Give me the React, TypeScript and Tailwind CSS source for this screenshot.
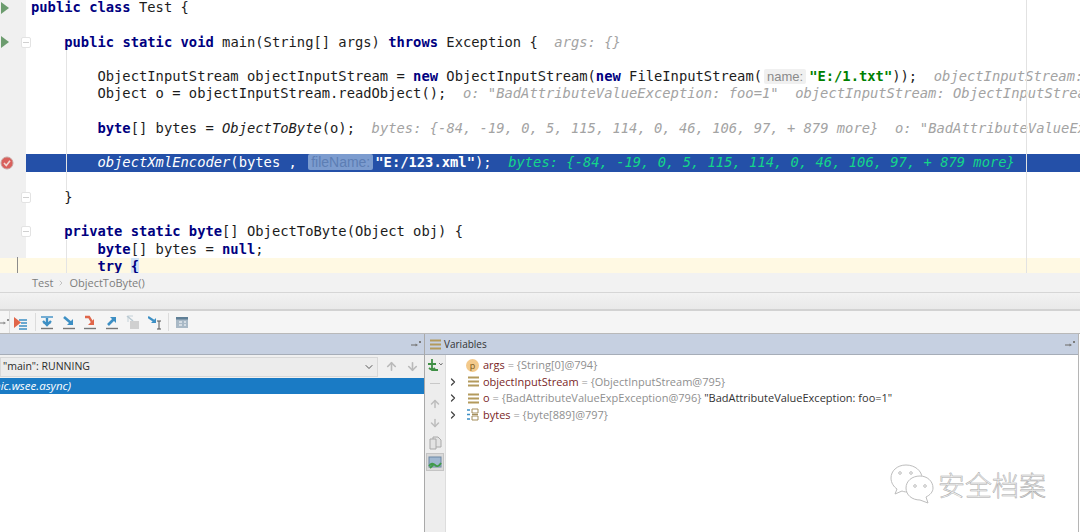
import type { ReactNode } from "react";
import { ArrowDown, ArrowUp, ChevronDown, ChevronRight } from "lucide-react";

const K = ({ children }: { children: ReactNode }) => (
  <span className="font-bold text-[#000080]">{children}</span>
);
const S = ({ children }: { children: ReactNode }) => (
  <span className="font-bold text-[#008000]">{children}</span>
);
const H = ({ children }: { children: ReactNode }) => (
  <span className="italic text-[#a3a3a3]">{children}</span>
);
const I = ({ children }: { children: ReactNode }) => <span className="italic">{children}</span>;

const Fold = () => (
  <span className="absolute right-[-5px] top-[3px] h-[11px] w-[10px] rounded-[2px] border border-[#e3e3e3] bg-white">
    <span className="mx-auto mt-[4px] block h-px w-[6px] bg-[#d0d0d0]" />
  </span>
);

const RunMark = () => (
  <svg width="8" height="12" viewBox="0 0 8 12" className="ml-[1px]">
    <path d="M0 0 L8 6 L0 12 Z" fill="#6c9c6e" />
  </svg>
);

const Breakpoint = () => (
  <svg width="14" height="14" viewBox="0 0 14 14" className="ml-[0px]">
    <circle cx="7" cy="7" r="6" fill="#d9605c" stroke="#c9a3a0" />
    <path d="M4 7 L6.3 9.5 L10 4.8" fill="none" stroke="#f3d9d4" strokeWidth="1.6" />
  </svg>
);

function Line({
  children,
  gutter,
  fold,
  selected,
  current,
  first,
}: {
  children?: ReactNode;
  gutter?: ReactNode;
  fold?: boolean;
  selected?: boolean;
  current?: boolean;
  first?: boolean;
}) {
  return (
    <div className={`flex ${first ? "h-[16.25px]" : "h-[17.25px]"} ${current ? "bg-[#fff9e3]" : ""}`}>
      <div
        className={`relative flex w-[26px] shrink-0 items-center ${current ? "" : "bg-[#f0f0f0]"}`}
      >
        {gutter}
        {fold && <Fold />}
      </div>
      <pre
        className={`flex-1 overflow-hidden whitespace-pre pl-[5px] font-['DejaVu_Sans_Mono',monospace] text-[13.8px] ${
          first ? "leading-[15.25px]" : "leading-[17.25px]"
        } ${selected ? "bg-[#2450a8] text-white" : "text-[#1c1c1c]"}`}
      >
        {children}
      </pre>
    </div>
  );
}

function Editor() {
  return (
    <div className="relative h-[273px] shrink-0 overflow-hidden bg-white">
      <div>
        <Line first gutter={<RunMark />}>
          <K>public class</K> Test {"{"}
        </Line>
        <Line />
        <Line gutter={<RunMark />} fold>
          {"    "}
          <K>public static void</K> main(String[] args) <K>throws</K> Exception {"{  "}
          <H>args: {"{}"}</H>
        </Line>
        <Line />
        <Line>
          {"        ObjectInputStream objectInputStream = "}
          <K>new</K> ObjectInputStream(<K>new</K> FileInputStream(
          <span className="ml-[2px] mr-[3px] rounded-[2px] bg-[#f0f0f0] px-[3px] font-['Liberation_Sans',sans-serif] text-[13px] text-[#8a8a8a]">
            name:
          </span>
          <S>"E:/1.txt"</S>
          {"));  "}
          <H>objectInputStream: ObjectInputStream@795</H>
        </Line>
        <Line>
          {"        Object o = objectInputStream.readObject();  "}
          <H>o: "BadAttributeValueException: foo=1"  objectInputStream: ObjectInputStream@795</H>
        </Line>
        <Line />
        <Line>
          {"        "}
          <K>byte</K>[] bytes = <I>ObjectToByte</I>(o);{"  "}
          <H>
            bytes: {"{-84, -19, 0, 5, 115, 114, 0, 46, 106, 97, + 879 more}"}
            {'  o: "BadAttributeValueException: foo=1"'}
          </H>
        </Line>
        <Line />
        <Line gutter={<Breakpoint />} selected>
          {"        "}
          <I>objectXmlEncoder</I>(bytes ,{" "}
          <span className="ml-[3px] mr-[2px] rounded-[2px] bg-[#7c9ccf] px-[3px] font-['Liberation_Sans',sans-serif] text-[14px] text-[#5d7eb4]">
            fileName:
          </span>
          <span className="font-bold">"E:/123.xml"</span>
          {");  "}
          <span className="italic text-[#14d68a]">
            bytes: {"{-84, -19, 0, 5, 115, 114, 0, 46, 106, 97, + 879 more}"}
          </span>
        </Line>
        <Line />
        <Line fold>{"    }"}</Line>
        <Line />
        <Line fold>
          {"    "}
          <K>private static byte</K>[] ObjectToByte(Object obj) {"{"}
        </Line>
        <Line>
          {"        "}
          <K>byte</K>[] bytes = <K>null</K>;
        </Line>
        <Line current>
          {"        "}
          <K>try</K> <span className="bg-[#cfe3f7] font-bold text-[#000080]">{"{"}</span>
        </Line>
      </div>
      {/* indent guides + right margin + caret mark, painted over the lines */}
      <div className="absolute left-[66px] top-[50px] h-[140px] w-px bg-[#e4e4e4]" />
      <div className="absolute left-[66px] top-[240px] h-[33px] w-px bg-[#e4e4e4]" />
      <div className="absolute left-[1026px] top-0 h-[273px] w-px bg-[#e2e2e2]" />
      <div className="absolute left-[17px] top-[257px] h-[16px] w-px bg-[#8c8c8c]" />
    </div>
  );
}

const Pin = ({ className = "" }: { className?: string }) => (
  <svg width="10" height="8" viewBox="0 0 10 8" className={className}>
    <path d="M0 5 H6" stroke="#7b7b7b" strokeWidth="1.2" />
    <path d="M4.5 3.5 L7 5 L4.5 6.5 Z" fill="#7b7b7b" />
    <rect x="8" y="1" width="2" height="2" fill="#7b7b7b" />
  </svg>
);

const StepIcon = ({ children, w = 14 }: { children: ReactNode; w?: number }) => (
  <svg width={w} height="15" viewBox={`0 0 ${w} 15`} className="shrink-0">
    {children}
  </svg>
);

function Toolbar() {
  const blue = "#3d8fc4";
  const red = "#e0664a";
  return (
    <div className="flex h-[22px] shrink-0 items-center bg-[#f5f5f5]">
      <Pin className="ml-[-1px] opacity-80" />
      <div className="ml-[0px] h-[22px] w-px bg-[#dcdcdc]" />
      <div className="ml-[4px]">
        <StepIcon>
          <path d="M0 2 L7 7.5 L0 13 Z" fill={red} />
          <path d="M5 5 H13 M7 8 H13 M5 11 H13 M5 14 H13" stroke={blue} strokeWidth="1.4" />
        </StepIcon>
      </div>
      <div className="ml-[7px] h-[18px] w-px bg-[#dcdcdc]" />
      <div className="ml-[4px] flex items-center gap-[7.6px]">
        <StepIcon>
          <path d="M1 2 H13" stroke={blue} strokeWidth="1.4" />
          <path d="M7 3 V9 M3 6 L7 10 L11 6" stroke={blue} strokeWidth="2.4" fill="none" />
          <path d="M3 8 H11" stroke={blue} strokeWidth="0.8" />
          <path d="M1 13.5 H13" stroke="#777" strokeWidth="1.4" />
        </StepIcon>
        <StepIcon>
          <path d="M2 2 L9 8" stroke={blue} strokeWidth="2.6" />
          <path d="M5 10 H11 V4 Z" fill={blue} />
          <path d="M1 13.5 H13" stroke="#777" strokeWidth="1.4" />
        </StepIcon>
        <StepIcon>
          <path d="M2 2 H6 L9 7" stroke={red} strokeWidth="2.4" fill="none" />
          <path d="M5 10 H11 V4 Z" fill={red} />
          <path d="M1 13.5 H13" stroke="#777" strokeWidth="1.4" />
        </StepIcon>
        <StepIcon>
          <path d="M3 10 L9 4" stroke={blue} strokeWidth="2.6" />
          <path d="M5 2 H11 V8 Z" fill={blue} />
          <path d="M1 13.5 H13" stroke="#777" strokeWidth="1.4" />
        </StepIcon>
        <StepIcon>
          <path d="M1 1 L7 6" stroke="#b9c9d2" strokeWidth="1.6" />
          <path d="M2 7 V1 M2 1 H7" stroke="#b9c9d2" strokeWidth="0.8" />
          <rect x="4" y="6" width="9" height="8" fill="#d0d0d0" />
        </StepIcon>
        <StepIcon>
          <path d="M0 2 L6 6" stroke={blue} strokeWidth="2.2" />
          <path d="M3 8 H8 V3 Z" fill={blue} />
          <path d="M9 6 H13 M11 6 V14 M9 14 H13" stroke="#555" strokeWidth="1" />
        </StepIcon>
      </div>
      <div className="ml-[6px] h-[18px] w-px bg-[#dcdcdc]" />
      <div className="ml-[6px]">
        <StepIcon>
          <rect x="1" y="2" width="12" height="11" fill="#a9b9c6" />
          <rect x="1" y="2" width="12" height="2.5" fill="#5f7f96" />
          <path d="M4 7 H7 M4 10 H7 M9 7 H11 M9 10 H11" stroke="#fff" strokeWidth="1.2" />
        </StepIcon>
      </div>
    </div>
  );
}

function FramesPanel() {
  return (
    <div className="flex w-[425px] shrink-0 flex-col border-r border-[#a9a9a9] bg-white">
      <div className="flex h-[21px] shrink-0 items-center justify-end border-b border-[#a6adb8] bg-[#c6d0e1] pr-[3px]">
        <Pin />
      </div>
      <div className="flex h-[23px] shrink-0 items-center bg-[#f0f0f0]">
        <div className="flex h-[20px] w-[378px] items-center justify-between border border-[#d8d8d8] bg-[#ececec] pr-[2px] pl-[2px] font-['Open_Sans',sans-serif] text-[10.5px] text-[#2b2b2b]">
          <span>"main": RUNNING</span>
          <ChevronDown size={12} strokeWidth={2} className="text-[#555]" />
        </div>
        <div className="ml-[7px] flex items-center gap-[8px] text-[#b9b9b9]">
          <ArrowUp size={13} strokeWidth={3} />
          <ArrowDown size={13} strokeWidth={3} />
        </div>
      </div>
      <div className="h-[16px] shrink-0 overflow-hidden whitespace-nowrap bg-[#1a7bc5] font-['Open_Sans',sans-serif] text-[11.5px] italic leading-[16px] text-white">
        <span className="ml-[-6px]">nic.wsee.async)</span>
      </div>
    </div>
  );
}

const StackIcon = () => (
  <svg width="11" height="11" viewBox="0 0 11 11" className="shrink-0">
    <path d="M0 1.5 H11 M0 5.5 H11 M0 9.5 H11" stroke="#b39a5c" strokeWidth="2.2" />
  </svg>
);

function VarRow({
  chevron = true,
  icon,
  children,
}: {
  chevron?: boolean;
  icon: ReactNode;
  children: ReactNode;
}) {
  return (
    <div className="flex h-[16.5px] items-center whitespace-nowrap">
      <div className="flex w-[13px] shrink-0 justify-center">
        {chevron && <ChevronRight size={12} strokeWidth={2.5} className="text-[#444]" />}
      </div>
      <div className="flex w-[24px] shrink-0 justify-end pr-[4px]">{icon}</div>
      <div className="font-['Open_Sans',sans-serif] text-[11px] text-[#8f8f8f]">{children}</div>
    </div>
  );
}

const N = ({ children }: { children: ReactNode }) => (
  <span className="text-[#7a1f1f]">{children}</span>
);

function VariablesPanel() {
  return (
    <div className="flex min-w-0 flex-1 flex-col">
      <div className="flex h-[21px] shrink-0 items-center border-b border-[#a6adb8] bg-[#c6d0e1] pl-[5px] pr-[3px]">
        <StackIcon />
        <span className="ml-[3px] flex-1 font-['Open_Sans',sans-serif] text-[10px] text-[#333]">
          Variables
        </span>
        <Pin />
      </div>
      <div className="flex flex-1">
        <div className="flex w-[21px] shrink-0 flex-col items-center border-r border-[#dddddd] bg-[#ededed] pt-[3px]">
          <svg width="16" height="15" viewBox="0 0 16 15">
            <path
              d="M5 1 V12 H11 M1 6 H9 M2 10 Q5 13 8 10"
              stroke="#3f8f45"
              strokeWidth="1.8"
              fill="none"
            />
            <path d="M12 5 L14 7 L15.5 5" stroke="#777" fill="none" />
          </svg>
          <div className="mt-[10px] h-px w-[10px] bg-[#c8c8c8]" />
          <ArrowUp size={12} strokeWidth={3} className="mt-[14px] text-[#bdbdbd]" />
          <ArrowDown size={12} strokeWidth={3} className="mt-[7px] text-[#bdbdbd]" />
          <svg width="13" height="14" viewBox="0 0 13 14" className="mt-[7px]">
            <path d="M1 3 H7 V13 H1 Z M4 3 V1 H9 L12 4 V11 H7" fill="#e3e3e3" stroke="#a9a9a9" />
          </svg>
          <div className="mt-[3px] flex h-[18px] w-[18px] items-center justify-center border border-[#c4c4c4] bg-[#d9d9d9]">
            <svg width="14" height="13" viewBox="0 0 14 13">
              <rect x="1" y="1" width="12" height="10" fill="#9fb7d0" stroke="#6c87a3" />
              <path d="M1 10 Q4 6 7 9 T13 7 M2 12 L6 8" stroke="#3f9a4a" strokeWidth="1.8" fill="none" />
            </svg>
          </div>
        </div>
        <div className="flex-1 bg-white pt-[2px]">
          <VarRow
            chevron={false}
            icon={
              <span className="flex h-[13px] w-[13px] items-center justify-center rounded-full bg-[#f3c98b] font-['Open_Sans',sans-serif] text-[9px] leading-none text-[#7a5a20]">
                p
              </span>
            }
          >
            <N>args</N> = {"{String[0]@794}"}
          </VarRow>
          <VarRow icon={<StackIcon />}>
            <N>objectInputStream</N> = {"{ObjectInputStream@795}"}
          </VarRow>
          <VarRow icon={<StackIcon />}>
            <N>o</N> = {"{BadAttributeValueExpException@796} "}
            <span className="text-[#333]">"BadAttributeValueException: foo=1"</span>
          </VarRow>
          <VarRow
            icon={
              <svg width="12" height="13" viewBox="0 0 12 13">
                <path d="M0 2 H3 M0 6.5 H3 M0 11 H3" stroke="#3d8fc4" strokeWidth="1.4" />
                <path d="M5 1 H11 V5 H5 Z M5 8 H11 V12 H5 Z M5 6.5 H11" stroke="#a48d5a" fill="none" />
              </svg>
            }
          >
            <N>bytes</N> = {"{byte[889]@797}"}
          </VarRow>
        </div>
      </div>
    </div>
  );
}

function Watermark() {
  return (
    <div className="absolute left-[889px] top-[463px] flex items-center">
      <svg width="48" height="42" viewBox="0 0 48 42" fill="#fff" stroke="#bdbdbd" strokeWidth="1">
        <path d="M17 2 C8 2 2 8 2 15 C2 20 5 24 8 26 L6 31 L13 28 C15 29 18 29 20 29 C28 29 33 22 33 15 C33 8 26 2 17 2 Z" />
        <path d="M31 13 C23 13 17 18 17 25 C17 32 23 37 31 37 L39 40 L37 34 C41 32 44 29 44 25 C44 18 38 13 31 13 Z" />
        <circle cx="11" cy="10" r="1.3" />
        <circle cx="22" cy="10" r="1.3" />
        <circle cx="26" cy="23" r="1.3" />
        <circle cx="36" cy="23" r="1.3" />
      </svg>
      <span className="ml-[1px] font-['Noto_Sans_CJK_SC',sans-serif] text-[27px] font-light leading-none tracking-[0px] text-[#f4f4f4] [-webkit-text-stroke:0.5px_#a8a8a8]">
        安全档案
      </span>
    </div>
  );
}

export default function App() {
  return (
    <div className="relative flex h-[532px] w-[1080px] flex-col overflow-hidden bg-white">
      <Editor />
      <div className="flex h-[20px] shrink-0 items-center gap-[4px] border-b border-[#d6d6d6] bg-[#f2f2f2] pl-[32px] pt-[1px] font-['Open_Sans',sans-serif] text-[11px] text-[#7d7d7d]">
        <span>Test</span>
        <ChevronRight size={8} className="text-[#aaa]" />
        <span>ObjectToByte()</span>
      </div>
      <div className="h-[18px] shrink-0 border-b-2 border-[#d2d2d2] bg-gradient-to-b from-[#f2f2f2] to-[#e9e9e9]" />
      <Toolbar />
      <div className="h-px shrink-0 bg-[#b9b9b9]" />
      <div className="flex min-h-0 flex-1 pr-[1px]">
        <FramesPanel />
        <VariablesPanel />
        <div className="w-px shrink-0 bg-[#b5b5b5]" />
      </div>
      <Watermark />
    </div>
  );
}
